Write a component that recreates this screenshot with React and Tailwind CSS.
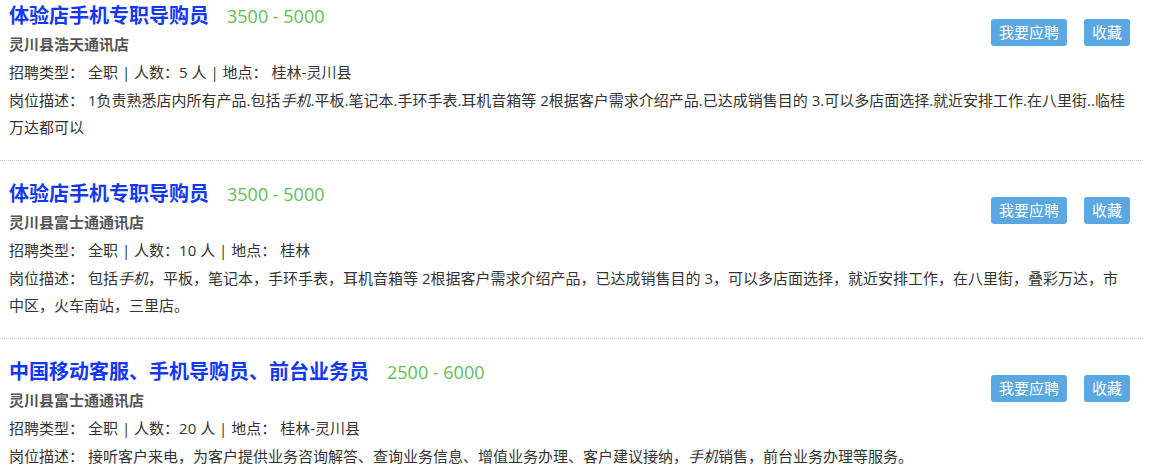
import React from "react";

const FONT = { fontFamily: '"Open Sans", "Noto Sans CJK SC", sans-serif' };

const jobs = [
  {
    title: "体验店手机专职导购员",
    salary: "3500 - 5000",
    company: "灵川县浩天通讯店",
    type: "全职",
    count: "5",
    place: "桂林-灵川县",
    desc: [
      "1负责熟悉店内所有产品.包括",
      { em: "手机" },
      ".平板.笔记本.手环手表.耳机音箱等 2根据客户需求介绍产品.已达成销售目的 3.可以多店面选择.就近安排工作.在八里街..临桂万达都可以",
    ],
  },
  {
    title: "体验店手机专职导购员",
    salary: "3500 - 5000",
    company: "灵川县富士通通讯店",
    type: "全职",
    count: "10",
    place: "桂林",
    desc: [
      "包括",
      { em: "手机" },
      "，平板，笔记本，手环手表，耳机音箱等 2根据客户需求介绍产品，已达成销售目的 3，可以多店面选择，就近安排工作，在八里街，叠彩万达，市中区，火车南站，三里店。",
    ],
  },
  {
    title: "中国移动客服、手机导购员、前台业务员",
    salary: "2500 - 6000",
    company: "灵川县富士通通讯店",
    type: "全职",
    count: "20",
    place: "桂林-灵川县",
    desc: [
      "接听客户来电，为客户提供业务咨询解答、查询业务信息、增值业务办理、客户建议接纳，",
      { em: "手机" },
      "销售，前台业务办理等服务。",
    ],
  },
];

function Job({ job, first }) {
  return (
    <div
      className={`${first ? "pt-px" : "pt-[18px]"} pb-[19px] pl-[9px] pr-[13px] border-b border-dotted border-[#c8c8c8] w-[1143px]`}
    >
      <div className="float-right flex gap-[17px] mt-[18px]">
        <button className="h-[27px] px-[8px] rounded-[3px] bg-[#5ba7e1] text-white text-[15px] leading-[27px]">
          我要应聘
        </button>
        <button className="h-[27px] px-[8px] rounded-[3px] bg-[#5ba7e1] text-white text-[15px] leading-[27px]">
          收藏
        </button>
      </div>
      <div className="flex items-baseline h-[30px]">
        <span className="text-[20px] leading-[30px] font-bold text-[#1438f5]">{job.title}</span>
        <span className="ml-[18px] text-[18px] leading-[30px] text-[#62bd4f]">{job.salary}</span>
      </div>
      <div className="text-[15px] font-bold text-[#555] leading-[28px] mt-[-1px]">{job.company}</div>
      <div className="text-[15px] text-[#333] leading-[28px]">
        <span className="inline-block mr-[4px]">招聘类型：</span>
        {job.type} | 人数：{job.count} 人 | 地点：
        <span className="inline-block ml-[4px]">{job.place}</span>
      </div>
      <div className="text-[15px] text-[#333] leading-[27px] mt-px">
        <span className="inline-block mr-[4px]">岗位描述：</span>
        {job.desc.map((d, i) =>
          typeof d === "string" ? <span key={i}>{d}</span> : <em key={i}>{d.em}</em>
        )}
      </div>
    </div>
  );
}

export default function App() {
  return (
    <div className="bg-white w-[1160px] h-[475px] overflow-hidden" style={FONT}>
      {jobs.map((j, i) => (
        <Job key={i} job={j} first={i === 0} />
      ))}
    </div>
  );
}
